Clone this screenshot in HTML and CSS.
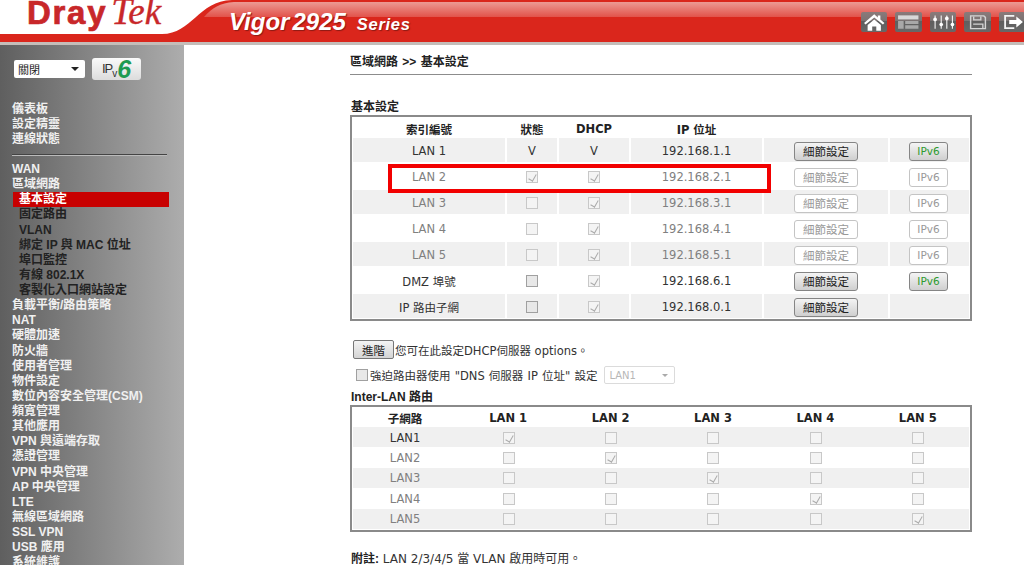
FILE: index.html
```html
<!DOCTYPE html>
<html lang="zh-Hant">
<head>
<meta charset="utf-8">
<title>Vigor2925 Series</title>
<link rel="stylesheet" href="styles.css">
</head>
<body>
<header class="top">
  <svg class="top-bg" viewBox="0 0 1024 45" preserveAspectRatio="none" aria-hidden="true">
    <defs>
      <linearGradient id="gloss" x1="0" y1="0" x2="0" y2="1">
        <stop offset="0" stop-color="#ec9a94"/>
        <stop offset="1" stop-color="#e2524a"/>
      </linearGradient>
    </defs>
    <rect x="0" y="42" width="1024" height="3" fill="#c4bdb9"/>
    <path d="M0 34H162C192 34 198 1 232 0H1024V42H0Z" fill="#da261c"/>
    <path d="M204 17C212 8 220 3 234 2H1024V17Z" fill="url(#gloss)"/>
  </svg>
  <div class="logo"><span class="logo-a">Dray</span><span class="logo-b">Tek</span></div>
  <div class="model"><span class="model-a">Vigor</span><span class="model-n">2925</span><span class="model-s">Series</span></div>
  <nav class="tools">
    <a class="tool"><svg viewBox="0 0 26 19"><path d="M13 2 3 10.500 4.500 12 13 5l8.500 7 1.500-1.500L19 7V3h-2.500v2zM6.500 12.500 13 7l6.500 5.500V18H15v-4h-4v4H6.500z" fill="#fff"/></svg></a>
    <a class="tool"><svg viewBox="0 0 26 19"><path d="M3 3h20v4H3z" fill="#d8d8d8"/><path d="M3 8.500h5.500V16H3zM10 8.500h13v3H10zM10 12.800h13V16H10z" fill="#a8a8a8"/></svg></a>
    <a class="tool"><svg viewBox="0 0 26 19"><path d="M5 3v13M11 3v13M16.500 3v13M22 3v13" stroke="#f2f2f2" stroke-width="1.100" fill="none"/><circle cx="5" cy="7" r="1.800" fill="#fff"/><circle cx="11" cy="12" r="1.800" fill="#fff"/><circle cx="16.500" cy="6" r="1.800" fill="#fff"/><circle cx="22" cy="12" r="1.800" fill="#fff"/></svg></a>
    <a class="tool"><svg viewBox="0 0 26 19"><path d="M6.500 3.500h13L21 5v11H6.500z" fill="none" stroke="#d4d4d4" stroke-width="1.400"/><path d="M9.500 4v3.500h7V4M9 11.500h9.500V16" fill="none" stroke="#d4d4d4" stroke-width="1.300"/></svg></a>
    <a class="tool"><svg viewBox="0 0 26 19"><path d="M15 3.500H6v12h9" fill="none" stroke="#f4f4f4" stroke-width="1.800"/><path d="M10 7.500h7V4l6.500 5.500L17 15v-3.500h-7z" fill="#fff"/></svg></a>
  </nav>
</header>
<div class="main">
  <aside class="side">
    <div class="side-top">
      <div class="sel sel-side"><select><option>關閉</option></select></div>
      <a class="v6"><span class="v6-ip">IP<sub>v</sub></span><span class="v6-six">6</span></a>
    </div>
    <ul class="menu">
      <li>儀表板</li>
      <li>設定精靈</li>
      <li>連線狀態</li>
      <li class="menu-rule"></li>
      <li>WAN</li>
      <li>區域網路</li>
      <li class="sub active">基本設定</li>
      <li class="sub">固定路由</li>
      <li class="sub">VLAN</li>
      <li class="sub">綁定 IP 與 MAC 位址</li>
      <li class="sub">埠口監控</li>
      <li class="sub">有線 802.1X</li>
      <li class="sub">客製化入口網站設定</li>
      <li>負載平衡/路由策略</li>
      <li>NAT</li>
      <li>硬體加速</li>
      <li>防火牆</li>
      <li>使用者管理</li>
      <li>物件設定</li>
      <li>數位內容安全管理(CSM)</li>
      <li>頻寬管理</li>
      <li>其他應用</li>
      <li>VPN 與遠端存取</li>
      <li>憑證管理</li>
      <li>VPN 中央管理</li>
      <li>AP 中央管理</li>
      <li>LTE</li>
      <li>無線區域網路</li>
      <li>SSL VPN</li>
      <li>USB 應用</li>
      <li>系統維護</li>
    </ul>
  </aside>
  <main class="content">
    <h1 class="crumb">區域網路 &gt;&gt; 基本設定</h1>
    <h2 class="sec sec-first">基本設定</h2>
    <section class="box box-lan">
      <div class="rowa head"><span>索引編號</span><span>狀態</span><span>DHCP</span><span>IP 位址</span><span></span><span></span></div>
      <div class="rowa band"><span>LAN 1</span><span>V</span><span>V</span><span>192.168.1.1</span><span><button class="btn on">細節設定</button></span><span><button class="btn6 on">IPv6</button></span></div>
      <div class="rowa off"><span>LAN 2</span><span><input type="checkbox" class="ck" checked disabled></span><span><input type="checkbox" class="ck" checked disabled></span><span>192.168.2.1</span><span><button class="btn">細節設定</button></span><span><button class="btn6">IPv6</button></span></div>
      <div class="rowa band off"><span>LAN 3</span><span><input type="checkbox" class="ck" disabled></span><span><input type="checkbox" class="ck" checked disabled></span><span>192.168.3.1</span><span><button class="btn">細節設定</button></span><span><button class="btn6">IPv6</button></span></div>
      <div class="rowa off"><span>LAN 4</span><span><input type="checkbox" class="ck" disabled></span><span><input type="checkbox" class="ck" checked disabled></span><span>192.168.4.1</span><span><button class="btn">細節設定</button></span><span><button class="btn6">IPv6</button></span></div>
      <div class="rowa band off"><span>LAN 5</span><span><input type="checkbox" class="ck" disabled></span><span><input type="checkbox" class="ck" checked disabled></span><span>192.168.5.1</span><span><button class="btn">細節設定</button></span><span><button class="btn6">IPv6</button></span></div>
      <div class="rowa"><span>DMZ 埠號</span><span><input type="checkbox" class="ck dk" disabled></span><span><input type="checkbox" class="ck" checked disabled></span><span>192.168.6.1</span><span><button class="btn on">細節設定</button></span><span><button class="btn6 on">IPv6</button></span></div>
      <div class="rowa band"><span>IP 路由子網</span><span><input type="checkbox" class="ck dk" disabled></span><span><input type="checkbox" class="ck" checked disabled></span><span>192.168.0.1</span><span><button class="btn on">細節設定</button></span><span></span></div>
      <div class="mark"></div>
    </section>
    <div class="adv"><button class="btn-adv">進階</button><span>您可在此設定DHCP伺服器 options。</span></div>
    <div class="force"><input type="checkbox" class="ck dk" disabled><span>強迫路由器使用 "DNS 伺服器 IP 位址" 設定</span><div class="sel sel-lan"><select disabled><option>LAN1</option></select></div></div>
    <h2 class="sec sec-inter">Inter-LAN 路由</h2>
    <section class="box box-inter">
      <div class="rowb head"><span>子網路</span><span>LAN 1</span><span>LAN 2</span><span>LAN 3</span><span>LAN 4</span><span>LAN 5</span></div>
      <div class="rowb band first"><span>LAN1</span><span><input type="checkbox" class="ck" checked disabled></span><span><input type="checkbox" class="ck" disabled></span><span><input type="checkbox" class="ck" disabled></span><span><input type="checkbox" class="ck" disabled></span><span><input type="checkbox" class="ck" disabled></span></div>
      <div class="rowb off"><span>LAN2</span><span><input type="checkbox" class="ck" disabled></span><span><input type="checkbox" class="ck" checked disabled></span><span><input type="checkbox" class="ck" disabled></span><span><input type="checkbox" class="ck" disabled></span><span><input type="checkbox" class="ck" disabled></span></div>
      <div class="rowb band off"><span>LAN3</span><span><input type="checkbox" class="ck" disabled></span><span><input type="checkbox" class="ck" disabled></span><span><input type="checkbox" class="ck" checked disabled></span><span><input type="checkbox" class="ck" disabled></span><span><input type="checkbox" class="ck" disabled></span></div>
      <div class="rowb off"><span>LAN4</span><span><input type="checkbox" class="ck" disabled></span><span><input type="checkbox" class="ck" disabled></span><span><input type="checkbox" class="ck" disabled></span><span><input type="checkbox" class="ck" checked disabled></span><span><input type="checkbox" class="ck" disabled></span></div>
      <div class="rowb band off"><span>LAN5</span><span><input type="checkbox" class="ck" disabled></span><span><input type="checkbox" class="ck" disabled></span><span><input type="checkbox" class="ck" disabled></span><span><input type="checkbox" class="ck" disabled></span><span><input type="checkbox" class="ck" checked disabled></span></div>
    </section>
    <p class="note"><b>附註:</b> LAN 2/3/4/5 當 VLAN 啟用時可用。</p>
  </main>
</div>
</body>
</html>
```
FILE: styles.css
```css
* { box-sizing: border-box; }
html, body { margin: 0; height: 565px; overflow: hidden; background: #fff; }
body { font-family: "DejaVu Sans", "Noto Sans CJK TC", sans-serif; font-size: 11.500px; color: #333; }

/* header */
.top { position: relative; display: flex; height: 45px; overflow: hidden; }
.top-bg { position: absolute; left: 0; top: 0; width: 1024px; height: 45px; }
.logo { position: relative; margin: -4px 0 0 27px; width: 202px; height: 34px; line-height: 32px; color: #c8272a; white-space: nowrap; }
.logo-a { font: bold 33px/32px "Liberation Sans", sans-serif; letter-spacing: 1.700px; -webkit-text-stroke: 0.7px #c8272a; }
.logo-b { font: italic 37px/32px "Liberation Serif", serif; margin-left: 4px; -webkit-text-stroke: 0.4px #c8272a; }
.model { position: relative; color: #fff; font: italic bold 24px/44px "Liberation Sans", sans-serif; text-shadow: 1px 1px 1px #8c1a14; white-space: nowrap; }
.model-n { margin-left: 3px; }
.model-s { font-size: 16.500px; letter-spacing: 0.700px; margin-left: 11px; }
.tools { position: relative; display: flex; gap: 8px; margin-left: auto; padding-top: 12px; margin-right: -1px; }
.tool { display: block; width: 26.500px; height: 20px; border-radius: 2px; background: linear-gradient(#8a7a7a 0, #7a7272 45%, #5e5e5e 45%, #686868 100%); }
.tool svg { display: block; width: 100%; height: 100%; }

/* sidebar */
.main { display: flex; height: 520px; }
.side { flex: none; width: 184px; height: 520px; overflow: hidden; background: linear-gradient(90deg, #5f5f5f, #adadad); }
.side-top { display: flex; align-items: center; height: 46px; padding: 1px 0 0 14px; }
.sel { position: relative; }
.sel select { appearance: none; display: block; width: 100%; height: 100%; font: 11px "Noto Sans CJK TC", sans-serif; background: #fff; border: 0; padding: 0 0 0 4px; color: #222; border-radius: 2px; }
.sel::after { content: ""; position: absolute; top: 50%; right: 6px; margin-top: -2px; border: 4px solid transparent; border-top-color: #222; border-bottom: 0; }
.sel-side { width: 71px; height: 18px; }
.v6 { display: flex; align-items: center; justify-content: center; width: 49px; height: 22px; margin-left: 7px; border-radius: 3px; background: linear-gradient(#fafafa, #dcdcdc); font-family: "Liberation Sans", sans-serif; color: #333; }
.v6-ip { font-size: 13px; letter-spacing: -1px; }
.v6-ip sub { font-size: 10px; line-height: 0; }
.v6-six { font: italic bold 25px/20px "Liberation Sans", sans-serif; color: #1e9a50; margin-left: 1px; }
.menu { list-style: none; margin: 10.500px 0 0; padding: 0; font: bold 12px/15.140px "Liberation Sans", "Noto Sans CJK TC", sans-serif; color: #f0f0f0; }
.menu li { height: 15.140px; padding-left: 12px; white-space: nowrap; }
.menu .sub { padding-left: 19px; color: #222; }
.menu .active { margin-left: 13px; width: 156px; padding-left: 6px; background: #c80000; color: #fff; }
.menu-rule { position: relative; }
.menu-rule::after { content: ""; position: absolute; left: 12px; width: 155px; top: 7px; height: 1px; background: #444; box-shadow: 0 1px 0 #bbb; }

/* content */
.content { flex: none; width: 622px; margin-left: 166px; }
.crumb { margin: 10px 0 0; height: 20px; font: bold 12px/14px "Liberation Sans", "Noto Sans CJK TC", sans-serif; color: #222; border-bottom: 1px solid #8c8c8c; word-spacing: 1px; }
.sec { margin: 0; font: bold 12px/14px "Liberation Sans", "Noto Sans CJK TC", sans-serif; color: #222; padding-left: 1px; }
.sec-first { margin-top: 25px; height: 15px; }
.sec-inter { margin-top: 6px; height: 13px; }
.box { position: relative; border: 2px solid #8a8a8a; padding: 0 1px; }
.box-lan { height: 206px; }
.box-inter { height: 127px; margin-top: 2px; }

.rowa, .rowb { display: grid; align-items: center; text-align: center; }
.rowa { grid-template-columns: 152px 50px 70px 131px 124px 79px; column-gap: 2px; height: 24px; margin-bottom: 2px; }
.rowa.head { height: 21px; margin-bottom: 0; }
.rowb { grid-template-columns: 104px repeat(5, 1fr); height: 20.400px; }
.rowb.head { height: 20px; }
.rowa > span, .rowb > span { display: flex; align-items: center; justify-content: center; height: 100%; }
.rowa > span { padding-top: 2px; }
.rowb > span { padding-top: 1px; }
.rowb > span > .ck { margin-left: 1px; }
.rowa.band > span { background: #f0f0f0; }
.rowb.band { background: #f0f0f0; }
.head { font-weight: bold; color: #222; }
.off { color: #808080; }

.mark { position: absolute; left: 36px; top: 47px; width: 383px; height: 29px; border: 4px solid #f20000; }

.ck { appearance: none; position: relative; display: block; width: 12px; height: 12px; margin: 0; background: #f4f4f4; border: 1px solid #c8c8c8; }
.ck.dk { background: #e8e8e8; border-color: #a0a0a0; }
.ck:checked::after { content: ""; position: absolute; left: 3px; top: 1px; width: 4px; height: 7px; border: solid #aaa; border-width: 0 1px 1px 0; transform: rotate(30deg); }

.btn, .btn6, .btn-adv { font-family: "DejaVu Sans", "Noto Sans CJK TC", sans-serif; padding: 0; border-radius: 3px; }
.btn, .btn6 { height: 19px; background: #fff; border: 1px solid #c4c4c4; color: #999; font-size: 11.500px; }
.btn { width: 64px; }
.btn6 { width: 39px; margin-right: 2px; font-size: 10.500px; }
.btn.on, .btn6.on { background: linear-gradient(#f4f4f4, #cfcfcf); border-color: #858585; color: #222; }
.btn6.on { color: #2e9a2e; }

.adv { display: flex; align-items: center; height: 19px; margin: 19px 0 0 3px; font-size: 11.500px; color: #333; }
.btn-adv { width: 41px; height: 19px; margin-right: 1px; background: linear-gradient(#f4f4f4, #d4d4d4); border: 1px solid #777; border-radius: 2px; color: #222; font-size: 11.500px; }
.force { display: flex; align-items: center; height: 18px; margin: 7px 0 0 6px; font-size: 11.500px; color: #333; }
.force span { margin-left: 2px; word-spacing: 0.500px; }
.sel-lan { width: 71px; height: 18px; margin-left: 7px; }
.sel-lan select { border: 1px solid #ccc; color: #999; font-family: "DejaVu Sans", sans-serif; font-size: 10px; }
.sel-lan::after { border-top-color: #aaa; border-width: 3px; right: 7px; margin-top: -1px; }
.note { margin: 20px 0 0 1px; line-height: 14px; font-size: 12px; color: #333; }
.note b { font-family: "Liberation Sans", "Noto Sans CJK TC", sans-serif; font-size: 12px; color: #222; }
```
